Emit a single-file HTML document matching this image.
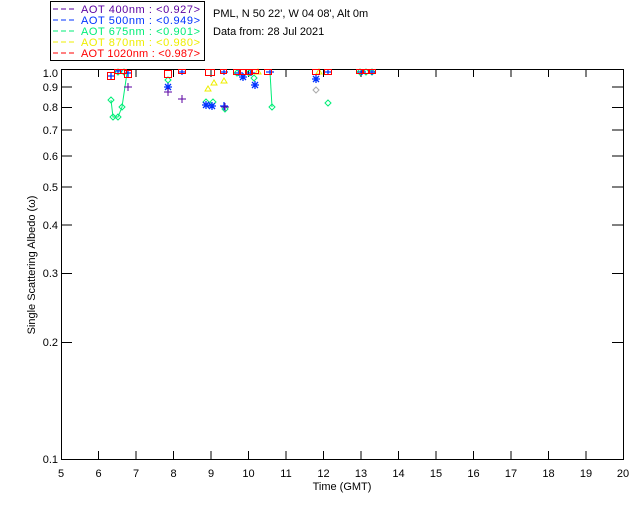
<!DOCTYPE html>
<html><head><meta charset="utf-8"><style>
body{margin:0;background:#fff;width:640px;height:512px;overflow:hidden}
svg{display:block}
text{font-family:"Liberation Sans","DejaVu Sans",sans-serif;font-size:11px}
</style></head><body>
<svg width="640" height="512" viewBox="0 0 640 512">
<rect x="50.5" y="1.5" width="154" height="59" fill="none" stroke="#000" stroke-width="1"/>
<g font-size="10.5">
<line x1="53" y1="9" x2="77" y2="9" stroke="#5a00a0" stroke-dasharray="5,3"/><text x="81" y="13" fill="#5a00a0" textLength="119" lengthAdjust="spacing">AOT  400nm : &lt;0.927&gt;</text>
<line x1="53" y1="20" x2="77" y2="20" stroke="#0033ff" stroke-dasharray="5,3"/><text x="81" y="24" fill="#0033ff" textLength="119" lengthAdjust="spacing">AOT  500nm : &lt;0.949&gt;</text>
<line x1="53" y1="31" x2="77" y2="31" stroke="#00ee77" stroke-dasharray="5,3"/><text x="81" y="35" fill="#00ee77" textLength="119" lengthAdjust="spacing">AOT  675nm : &lt;0.901&gt;</text>
<line x1="53" y1="42" x2="77" y2="42" stroke="#eeee00" stroke-dasharray="5,3"/><text x="81" y="46" fill="#eeee00" textLength="119" lengthAdjust="spacing">AOT  870nm : &lt;0.980&gt;</text>
<line x1="53" y1="53" x2="77" y2="53" stroke="#ff0000" stroke-dasharray="5,3"/><text x="81" y="57" fill="#ff0000" textLength="119" lengthAdjust="spacing">AOT 1020nm : &lt;0.987&gt;</text>
</g>
<text x="213" y="17">PML, N 50 22', W 04 08', Alt 0m</text>
<text x="213" y="35">Data from: 28 Jul 2021</text>
<rect x="61.5" y="69.5" width="562" height="390" fill="none" stroke="#000"/>
<g stroke="#000">
<path d="M61 87h11M61 107.5h11M61 130h11M61 156h11M61 187h11M61 225h11M61 273.5h11M61 342.5h11M623 87h-11M623 107.5h-11M623 130h-11M623 156h-11M623 187h-11M623 225h-11M623 273.5h-11M623 342.5h-11"/>
<path d="M98.5 460v-9M136 460v-9M173.5 460v-9M211 460v-9M248.5 460v-9M286 460v-9M323.5 460v-9M361 460v-9M398.5 460v-9M436 460v-9M473.5 460v-9M511 460v-9M548.5 460v-9M586 460v-9M98.5 69v8M136 69v8M173.5 69v8M211 69v8M248.5 69v8M286 69v8M323.5 69v8M361 69v8M398.5 69v8M436 69v8M473.5 69v8M511 69v8M548.5 69v8M586 69v8"/>
</g>
<g text-anchor="end" font-size="10.5">
<text x="58" y="77">1.0</text><text x="58" y="91">0.9</text><text x="58" y="111">0.8</text><text x="58" y="134">0.7</text><text x="58" y="160">0.6</text><text x="58" y="191">0.5</text><text x="58" y="229">0.4</text><text x="58" y="277">0.3</text><text x="58" y="346">0.2</text><text x="58" y="463">0.1</text>
</g>
<g text-anchor="middle" font-size="10.5">
<text x="61" y="477">5</text><text x="98.5" y="477">6</text><text x="136" y="477">7</text><text x="173.5" y="477">8</text><text x="211" y="477">9</text><text x="248.5" y="477">10</text><text x="286" y="477">11</text><text x="323.5" y="477">12</text><text x="361" y="477">13</text><text x="398.5" y="477">14</text><text x="436" y="477">15</text><text x="473.5" y="477">16</text><text x="511" y="477">17</text><text x="548.5" y="477">18</text><text x="586" y="477">19</text><text x="623" y="477">20</text>
<text x="342" y="490">Time (GMT)</text>
<text transform="translate(35,265) rotate(-90)">Single Scattering Albedo (ω)</text>
</g>
<g fill="none" stroke="#00ee77">
<path d="M111 100L113 117L118 117L122 107L127 73"/><path d="M270 72L272 107"/>
<path d="M111 97l3 3-3 3-3-3z M113 114l3 3-3 3-3-3z M118 114l3 3-3 3-3-3z M122 104l3 3-3 3-3-3z M206 99l3 3-3 3-3-3z M213 99l3 3-3 3-3-3z M225 106l3 3-3 3-3-3z M254 75l3 3-3 3-3-3z M272 104l3 3-3 3-3-3z M328 100l3 3-3 3-3-3z M168 77l3 3-3 3-3-3z M118 69l3 3-3 3-3-3z M124 69l3 3-3 3-3-3z M237 70l3 3-3 3-3-3z M249 70l3 3-3 3-3-3z M360 69l3 3-3 3-3-3z M366 69l3 3-3 3-3-3z M372 69l3 3-3 3-3-3z"/>
</g>
<path d="M316 87l3 3-3 3-3-3z" fill="none" stroke="#aaa"/>
<g fill="none" stroke="#eeee00"><path d="M205 91l3-5 3 5z M211 85l3-5 3 5z M221 83l3-5 3 5z M316 74l3-5 3 5z M255 74l3-5 3 5z"/></g>
<g stroke="#0033ff" stroke-width="1.3"><path d="M164 87h8M168 83v8M165 84l6 6M171 84l-6 6 M202 105h8M206 101v8M203 102l6 6M209 102l-6 6 M208 106h8M212 102v8M209 103l6 6M215 103l-6 6 M220 106h8M224 102v8 M239 77h8M243 73v8M240 74l6 6M246 74l-6 6 M251 85h8M255 81v8M252 82l6 6M258 82l-6 6 M312 79h8M316 75v8M313 76l6 6M319 76l-6 6 M107 76h8M111 72v8 M114 71h8M118 69v5 M124 73h8M128 70v7 M178 72h8M182 69v6 M220 72h8M224 69v6 M235 73h8M239 69v7 M247 73h8M251 69v7 M266 72h8M270 69v6 M324 72h8M328 69v6 M358 72h8M362 69v6 M368 72h8M372 69v6"/></g>
<g stroke="#5a00a0"><path d="M124 87h8M128 83v8 M164 92h8M168 88v8 M178 99h8M182 95v8 M221 107h8M225 103v8"/></g>
<g fill="none" stroke="#ff0000"><path d="M107.5 72.5h7v7h-7z M114.5 69.5h6v4h-6z M120.5 69.5h6v4h-6z M124.5 70.5h7v7h-7z M164.5 70.5h7v7h-7z M178.5 69.5h7v4h-7z M205.5 69.5h9v6h-9z M220.5 69.5h6v4h-6z M233.5 69.5h7v5h-7z M239.5 69.5h7v5h-7z M245.5 69.5h7v5h-7z M251.5 69.5h7v4h-7z M264.5 69.5h7v5h-7z M312.5 69.5h7v5h-7z M324.5 69.5h7v5h-7z M356.5 69.5h7v4h-7z M362.5 69.5h7v4h-7z M368.5 69.5h7v4h-7z"/></g>
</svg>
</body></html>
